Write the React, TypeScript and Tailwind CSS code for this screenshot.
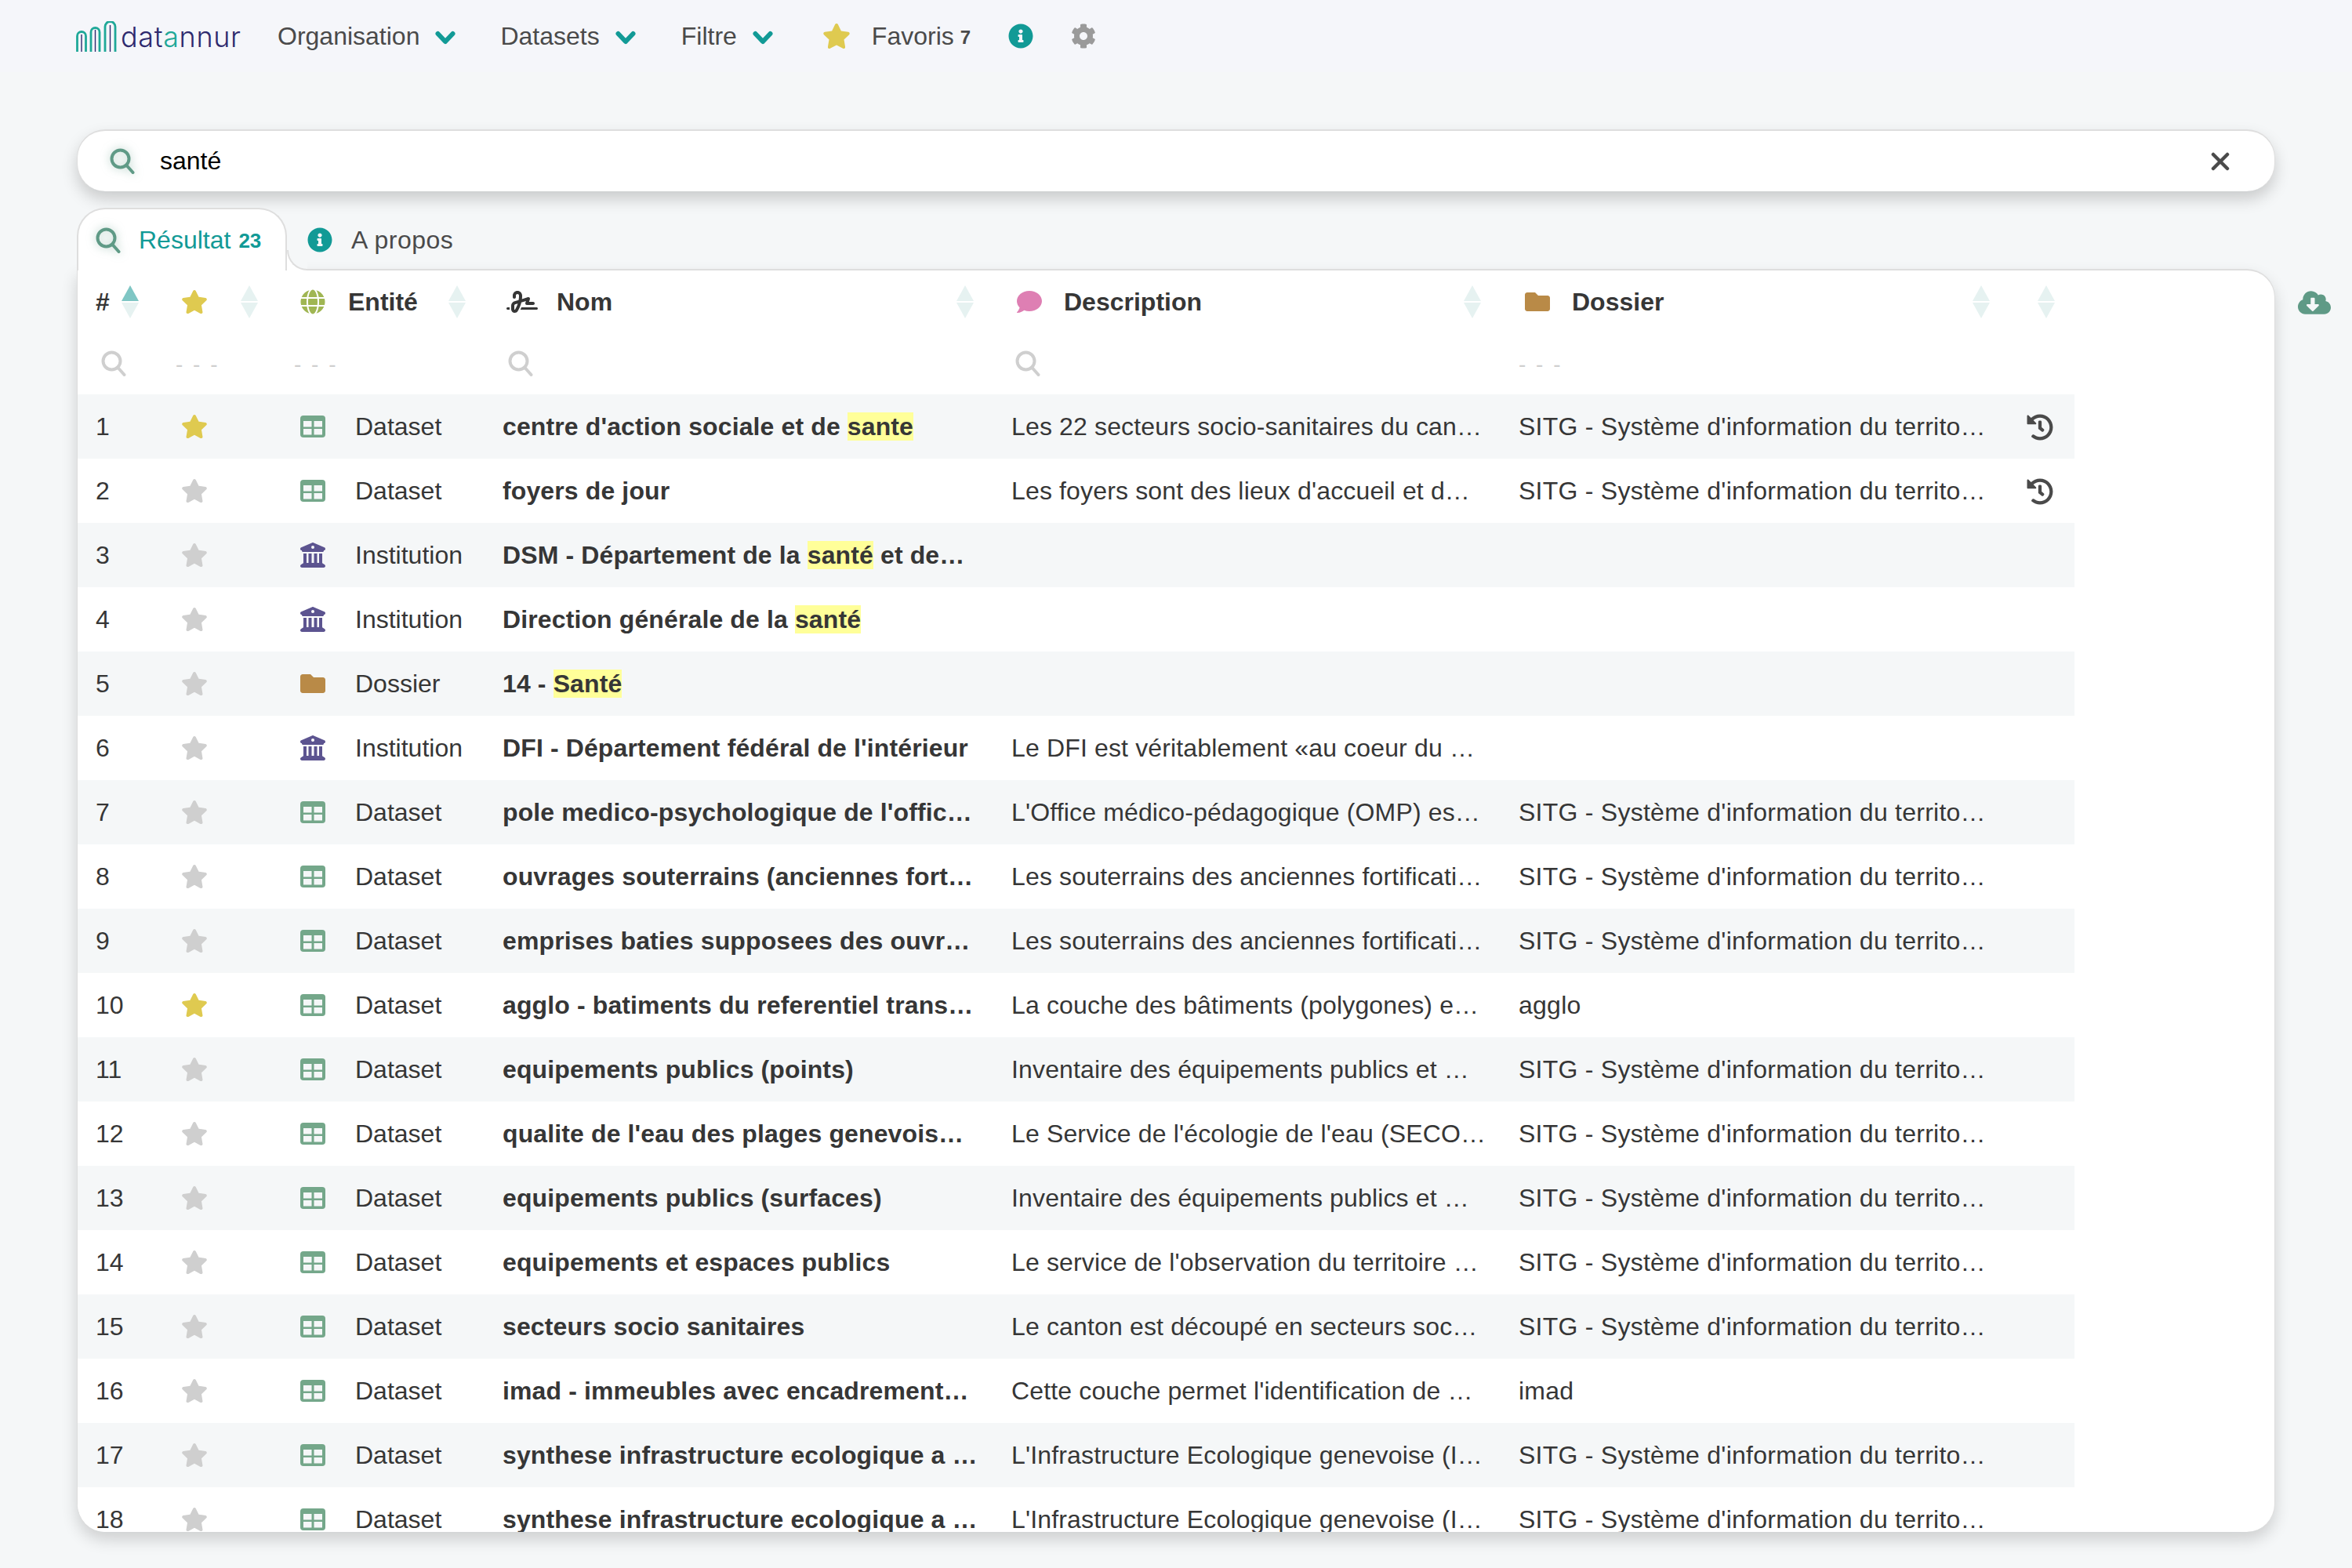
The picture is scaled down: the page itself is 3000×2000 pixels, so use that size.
import React from 'react';
import { FaCloudDownloadAlt, FaCog, FaComment, FaFolder, FaGlobe, FaHistory, FaInfoCircle, FaStar } from 'react-icons/fa';
import { FaBuildingColumns, FaSignature } from 'react-icons/fa6';

type Entity = 'Dataset' | 'Institution' | 'Dossier';

interface Row {
  name: React.ReactNode;
  entity: Entity;
  desc?: string;
  folder?: string;
  fav?: boolean;
  history?: boolean;
}

const SITG = "SITG - Système d'information du territo…";

const Mark: React.FC<{ children: React.ReactNode }> = ({ children }) => (
  <span className="bg-[#ffff99]">{children}</span>
);

const rows: Row[] = [
  { entity: 'Dataset', fav: true, history: true, name: <>centre d'action sociale et de <Mark>sante</Mark></>, desc: 'Les 22 secteurs socio-sanitaires du can…', folder: SITG },
  { entity: 'Dataset', history: true, name: 'foyers de jour', desc: "Les foyers sont des lieux d'accueil et d…", folder: SITG },
  { entity: 'Institution', name: <>DSM - Département de la <Mark>santé</Mark> et de…</> },
  { entity: 'Institution', name: <>Direction générale de la <Mark>santé</Mark></> },
  { entity: 'Dossier', name: <>14 - <Mark>Santé</Mark></> },
  { entity: 'Institution', name: "DFI - Département fédéral de l'intérieur", desc: 'Le DFI est véritablement «au coeur du …' },
  { entity: 'Dataset', name: "pole medico-psychologique de l'offic…", desc: "L'Office médico-pédagogique (OMP) es…", folder: SITG },
  { entity: 'Dataset', name: 'ouvrages souterrains (anciennes fort…', desc: 'Les souterrains des anciennes fortificati…', folder: SITG },
  { entity: 'Dataset', name: 'emprises baties supposees des ouvr…', desc: 'Les souterrains des anciennes fortificati…', folder: SITG },
  { entity: 'Dataset', fav: true, name: 'agglo - batiments du referentiel trans…', desc: 'La couche des bâtiments (polygones) e…', folder: 'agglo' },
  { entity: 'Dataset', name: 'equipements publics (points)', desc: 'Inventaire des équipements publics et …', folder: SITG },
  { entity: 'Dataset', name: "qualite de l'eau des plages genevois…", desc: "Le Service de l'écologie de l'eau (SECO…", folder: SITG },
  { entity: 'Dataset', name: 'equipements publics (surfaces)', desc: 'Inventaire des équipements publics et …', folder: SITG },
  { entity: 'Dataset', name: 'equipements et espaces publics', desc: "Le service de l'observation du territoire …", folder: SITG },
  { entity: 'Dataset', name: 'secteurs socio sanitaires', desc: 'Le canton est découpé en secteurs soc…', folder: SITG },
  { entity: 'Dataset', name: 'imad - immeubles avec encadrement…', desc: "Cette couche permet l'identification de …", folder: 'imad' },
  { entity: 'Dataset', name: 'synthese infrastructure ecologique a …', desc: "L'Infrastructure Ecologique genevoise (I…", folder: SITG },
  { entity: 'Dataset', name: 'synthese infrastructure ecologique a …', desc: "L'Infrastructure Ecologique genevoise (I…", folder: SITG },
];

const Sort: React.FC<{ active?: boolean }> = ({ active }) => (
  <svg width="22" height="42" viewBox="0 0 22 42" className="block shrink-0">
    <path d="M11 0 L22 20 L0 20 Z" fill={active ? '#7fc6c4' : '#e6f2f1'} />
    <path d="M11 42 L22 22 L0 22 Z" fill="#e6f2f1" />
  </svg>
);

const SearchIcon: React.FC<{ className: string }> = ({ className }) => (
  <svg width="32" height="33" viewBox="0 0 32 33" fill="none" className={`shrink-0 ${className}`}>
    <circle cx="13.5" cy="13.5" r="11" stroke="currentColor" strokeWidth="4" />
    <path d="M21.5 22 L29.5 31" stroke="currentColor" strokeWidth="4" strokeLinecap="round" />
  </svg>
);

const Chevron: React.FC = () => (
  <svg width="26" height="20" viewBox="0 0 26 20" fill="none" className="ml-[20px] mt-[3px] shrink-0">
    <path d="M3.5 5 L13 15 L22.5 5" stroke="#129a96" strokeWidth="6" strokeLinecap="round" strokeLinejoin="round" />
  </svg>
);

const TableIcon: React.FC = () => (
  <svg width="32" height="28" viewBox="0 0 32 28" className="shrink-0">
    <rect width="32" height="28" rx="4" fill="#74a78a" />
    <rect x="4" y="7" width="10.5" height="7.5" fill="#f5f7f8" />
    <rect x="17.5" y="7" width="10.5" height="7.5" fill="#f5f7f8" />
    <rect x="4" y="17" width="10.5" height="7.5" fill="#f5f7f8" />
    <rect x="17.5" y="17" width="10.5" height="7.5" fill="#f5f7f8" />
  </svg>
);

const EntityIcon: React.FC<{ entity: Entity }> = ({ entity }) => {
  if (entity === 'Dataset') return <TableIcon />;
  if (entity === 'Institution') return <FaBuildingColumns className="w-8 h-8 shrink-0 text-[#5c5490]" />;
  return <FaFolder className="w-8 h-8 shrink-0 text-[#b98a47]" />;
};

const Logo: React.FC = () => (
  <div className="flex items-end w-[210px] h-[42px] ml-[2px]">
    <svg width="52" height="40" viewBox="0 0 52 40" className="shrink-0" fill="none">
      <g stroke="#1fa898" strokeWidth="2.8">
        <path d="M1.5 39 V19 a5.5 5.5 0 0 1 11 0 V39" />
        <path d="M19 39 V14 a5.5 5.5 0 0 1 11 0 V39" />
        <path d="M37 39 V7 a6.5 6.5 0 0 1 13 0 V39" />
      </g>
      <g stroke="#2e2a6e" strokeWidth="1.4">
        <path d="M7 39 V17" />
        <path d="M24.5 39 V11" />
        <path d="M43.5 39 V5" />
      </g>
    </svg>
    <span className="ml-[5px] font-['Inter',sans-serif] font-light text-[36px] leading-[40px] tracking-[0.6px] text-[#2e2a6e]">
      dat<span className="text-[#1fa898]">a</span>nnur
    </span>
  </div>
);

const NavItem: React.FC<{ label: string; className: string }> = ({ label, className }) => (
  <div className={`flex items-center text-[#4a4a4a] ${className}`}>
    <span>{label}</span>
    <Chevron />
  </div>
);

const Dashes: React.FC = () => (
  <span className="text-[28px] tracking-[2.5px] text-[#cfcfcf]">- - -</span>
);

const gridCols = 'grid grid-cols-[107px_154px_258px_647px_647px_650px_84px] w-[2547px]';

const App: React.FC = () => (
  <div className="w-[3000px] h-[2000px] overflow-hidden bg-[#f5f7f8] font-['Liberation_Sans',Arial,sans-serif] text-[32px] text-[#363636]">
    <nav className="flex items-center h-[92px] pl-[95px] bg-[#f5f6fa]">
      <Logo />
      <NavItem label="Organisation" className="ml-[47px]" />
      <NavItem label="Datasets" className="ml-[57px]" />
      <NavItem label="Filtre" className="ml-[58px]" />
      <FaStar className="ml-[63px] w-[36px] h-[34px] text-[#dfca50]" />
      <span className="ml-[27px] text-[#4a4a4a]">Favoris</span>
      <span className="ml-[8px] mt-[4px] text-[24px] font-bold text-[#4a4a4a]">7</span>
      <FaInfoCircle className="ml-[48px] w-8 h-8 text-[#129a96]" />
      <FaCog className="ml-[48px] w-8 h-8 text-[#9a9a9a]" />
    </nav>

    <div className="ml-[98px] mt-[73px] w-[2804px] h-[79px] flex items-center bg-white rounded-[36px] border-t-2 border-x border-[#dedede] shadow-[0_10px_20px_rgba(0,0,0,0.18)]">
      <SearchIcon className="ml-[41px] text-[#5f9a86] drop-shadow-[0_0_6px_rgba(95,154,134,0.5)]" />
      <span className="ml-[32px] pb-[2px] text-black">santé</span>
      <svg width="24" height="24" viewBox="0 0 24 24" fill="none" className="ml-auto mr-[57px]">
        <path d="M3 3 L21 21 M21 3 L3 21" stroke="#4a4a4a" strokeWidth="4.5" strokeLinecap="round" />
      </svg>
    </div>

    <div className="ml-[98px] mt-[21px] w-[2804px] h-[78px] flex items-stretch">
      <div className="relative z-10 w-[268px] -mb-[2px] flex items-center bg-white rounded-t-[36px] border-t-2 border-x-2 border-[#dedede]">
        <SearchIcon className="ml-[22px] text-[#5f9a86] drop-shadow-[0_0_6px_rgba(95,154,134,0.5)]" />
        <span className="ml-[23px] text-[#129a96]">Résultat</span>
        <span className="ml-[10px] mt-[2px] text-[26px] font-bold text-[#129a96]">23</span>
        <div className="absolute -right-[28px] bottom-0 w-[26px] h-[26px] bg-white">
          <div className="w-full h-full bg-[#f5f7f8] rounded-bl-[26px] border-l-2 border-b-2 border-[#dedede]" />
        </div>
      </div>
      <div className="flex items-center pt-[3px]">
        <FaInfoCircle className="ml-[26px] w-8 h-8 text-[#129a96]" />
        <span className="ml-[24px] tracking-[0.5px] text-[#4a4a4a]">A propos</span>
      </div>
    </div>

    <div className="ml-[98px] flex items-start">
      <div className="w-[2804px] h-[1611px] overflow-hidden bg-white rounded-tr-[36px] rounded-b-[36px] border-t-2 border-x border-[#dedede] shadow-[0_10px_20px_rgba(0,0,0,0.16)]">
        <div className={`${gridCols} h-[80px] items-center font-bold`}>
          <div className="flex items-center pl-[23px] pr-[29px]">
            <span>#</span>
            <span className="ml-auto"><Sort active /></span>
          </div>
          <div className="flex items-center pl-[25px] pr-[31px]">
            <FaStar className="w-[34px] h-8 text-[#dfca50]" />
            <span className="ml-auto"><Sort /></span>
          </div>
          <div className="flex items-center pl-[23px] pr-[24px]">
            <FaGlobe className="w-8 h-8 text-[#a0b653]" />
            <span className="ml-[29px]">Entité</span>
            <span className="ml-auto"><Sort /></span>
          </div>
          <div className="flex items-center pl-[28px] pr-[23px]">
            <FaSignature className="w-[40px] h-8 text-[#363636]" />
            <span className="ml-[24px]">Nom</span>
            <span className="ml-auto"><Sort /></span>
          </div>
          <div className="flex items-center pl-[32px] pr-[23px]">
            <FaComment className="w-8 h-8 text-[#de7fb3]" />
            <span className="ml-[28px]">Description</span>
            <span className="ml-auto"><Sort /></span>
          </div>
          <div className="flex items-center pl-[33px] pr-[24px]">
            <FaFolder className="w-8 h-8 text-[#b98a47]" />
            <span className="ml-[28px]">Dossier</span>
            <span className="ml-auto"><Sort /></span>
          </div>
          <div className="flex items-center pl-[37px]">
            <Sort />
          </div>
        </div>

        <div className={`${gridCols} h-[76px] mb-[2px] items-center`}>
          <div className="pl-[30px]"><SearchIcon className="text-[#cfcfcf]" /></div>
          <div className="pl-[18px]"><Dashes /></div>
          <div className="pl-[15px]"><Dashes /></div>
          <div className="pl-[30px]"><SearchIcon className="text-[#cfcfcf]" /></div>
          <div className="pl-[30px]"><SearchIcon className="text-[#cfcfcf]" /></div>
          <div className="pl-[25px]"><Dashes /></div>
          <div />
        </div>

        {rows.map((row, i) => (
          <div key={i} className={`${gridCols} h-[82px] items-center ${i % 2 === 0 ? 'bg-[#f5f7f8]' : 'bg-white'}`}>
            <div className="pl-[23px]">{i + 1}</div>
            <div className="pl-[25px]">
              <FaStar className={`w-[34px] h-8 ${row.fav ? 'text-[#dfca50]' : 'text-[#cfcfcf]'}`} />
            </div>
            <div className="flex items-center pl-[23px]">
              <EntityIcon entity={row.entity} />
              <span className="ml-[38px]">{row.entity}</span>
            </div>
            <div className="pl-[23px] truncate font-bold tracking-[0.12px]">{row.name}</div>
            <div className="pl-[25px] truncate tracking-[0.15px]">{row.desc}</div>
            <div className="pl-[25px] truncate tracking-[0.25px]">{row.folder}</div>
            <div className="pl-[23px] pt-[2px]">
              {row.history && <FaHistory className="w-[34px] h-[34px] text-[#4a4a4a]" />}
            </div>
          </div>
        ))}
      </div>
      <FaCloudDownloadAlt className="ml-[29px] mt-[26px] w-[42px] h-[34px] text-[#5f9a86]" />
    </div>
  </div>
);

export default App;
